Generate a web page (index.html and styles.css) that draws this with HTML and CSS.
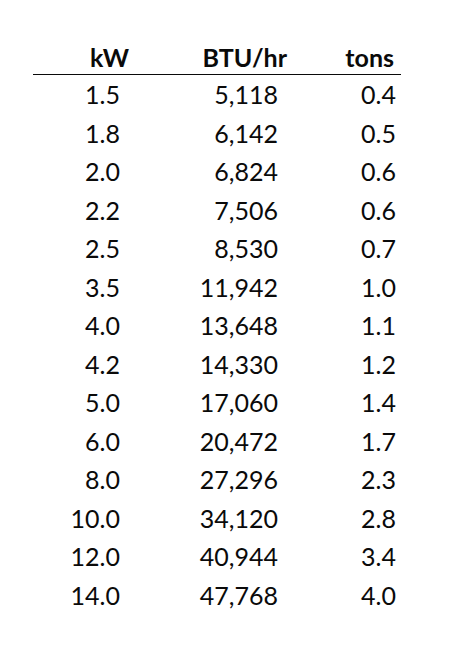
FILE: index.html
```html
<!DOCTYPE html>
<html>
<head>
<meta charset="utf-8">
<link rel="stylesheet" href="styles.css">
</head>
<body>
<div class="table">
  <div class="row head">
    <div class="c1">kW</div><div class="c2">BTU/hr</div><div class="c3">tons</div>
  </div>
  <div class="row"><div class="c1">1.5</div><div class="c2">5,118</div><div class="c3">0.4</div></div>
  <div class="row"><div class="c1">1.8</div><div class="c2">6,142</div><div class="c3">0.5</div></div>
  <div class="row"><div class="c1">2.0</div><div class="c2">6,824</div><div class="c3">0.6</div></div>
  <div class="row"><div class="c1">2.2</div><div class="c2">7,506</div><div class="c3">0.6</div></div>
  <div class="row"><div class="c1">2.5</div><div class="c2">8,530</div><div class="c3">0.7</div></div>
  <div class="row"><div class="c1">3.5</div><div class="c2">11,942</div><div class="c3">1.0</div></div>
  <div class="row"><div class="c1">4.0</div><div class="c2">13,648</div><div class="c3">1.1</div></div>
  <div class="row"><div class="c1">4.2</div><div class="c2">14,330</div><div class="c3">1.2</div></div>
  <div class="row"><div class="c1">5.0</div><div class="c2">17,060</div><div class="c3">1.4</div></div>
  <div class="row"><div class="c1">6.0</div><div class="c2">20,472</div><div class="c3">1.7</div></div>
  <div class="row"><div class="c1">8.0</div><div class="c2">27,296</div><div class="c3">2.3</div></div>
  <div class="row"><div class="c1">10.0</div><div class="c2">34,120</div><div class="c3">2.8</div></div>
  <div class="row"><div class="c1">12.0</div><div class="c2">40,944</div><div class="c3">3.4</div></div>
  <div class="row"><div class="c1">14.0</div><div class="c2">47,768</div><div class="c3">4.0</div></div>
</div>
</body>
</html>
```
FILE: styles.css
```css
html, body {
  margin: 0;
  padding: 0;
  background: #ffffff;
}
body {
  font-family: Lato, "Liberation Sans", sans-serif;
  color: #0a0a0a;
}
.table {
  margin-left: 33px;
  padding-top: 42px;
  width: 368px;
}
.row {
  display: grid;
  grid-template-columns: 97px 160px 111px;
  font-size: 25px;
  line-height: 38.5px;
  text-align: right;
}
.row .c1 { padding-right: 10px; }
.row .c2 { padding-right: 12px; }
.row .c3 { padding-right: 5px; }
.row.head {
  font-size: 25px;
  font-weight: 700;
  line-height: 30px;
  padding-bottom: 2px;
  border-bottom: 1.5px solid #0a0a0a;
}
.row.head .c1 { padding-right: 1px; }
.row.head .c2 { padding-right: 3px; }
.row.head .c3 { padding-right: 7px; }
```
